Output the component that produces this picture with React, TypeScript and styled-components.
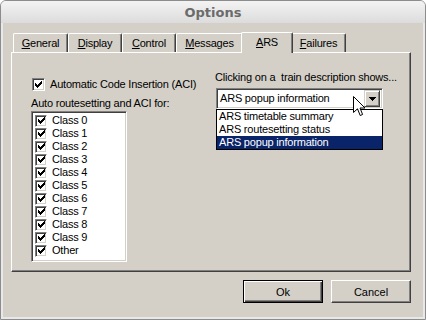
import React from "react";
import styled, { createGlobalStyle, css } from "styled-components";

const GlobalStyle = createGlobalStyle`
  html, body {
    margin: 0;
    padding: 0;
    background: #ffffff;
  }
  body {
    font-family: "Liberation Sans", Arial, sans-serif;
    font-size: 11px;
    color: #000;
  }
`;

const FACE = "#d4d0c8";

const Window = styled.div`
  width: 426px;
  height: 320px;
  box-sizing: border-box;
  border: 1px solid #8c8c8c;
  border-radius: 6px 6px 0 0;
  background: #e8e8e8;
  display: flex;
  flex-direction: column;
  overflow: hidden;
`;

const TitleBar = styled.div`
  height: 22px;
  flex: none;
  background: linear-gradient(#f3f3f3, #dcdcdc);
  display: flex;
  align-items: center;
  justify-content: center;
  font-family: "DejaVu Sans", sans-serif;
  font-weight: bold;
  font-size: 13px;
  color: #6b6b6b;
`;

const Client = styled.div`
  flex: 1;
  margin: 0 2px 2px 2px;
  background: ${FACE};
  padding: 9px 0 0 8px;
  display: flex;
  flex-direction: column;
`;

const TabStrip = styled.div`
  height: 20px;
  display: flex;
  align-items: flex-end;
  padding-left: 2px;
`;

const Tab = styled.div<{ $w: number; $active?: boolean }>`
  width: ${(p) => p.$w}px;
  height: 19px;
  box-sizing: border-box;
  background: ${FACE};
  border-top: 1px solid #ffffff;
  border-left: 1px solid #ffffff;
  border-right: 1px solid #404040;
  border-radius: 2px 2px 0 0;
  box-shadow: inset -1px 0 #808080;
  display: flex;
  align-items: center;
  justify-content: center;
  letter-spacing: -0.2px;
  ${(p) =>
    p.$active &&
    css`
      height: 21px;
      margin: 0 -2px -1px -2px;
      z-index: 1;
      padding-bottom: 2px;
    `}
`;

const Panel = styled.div`
  width: 400px;
  height: 220px;
  box-sizing: border-box;
  border-top: 1px solid #ffffff;
  border-left: 1px solid #ffffff;
  border-right: 1px solid #404040;
  border-bottom: 1px solid #404040;
  box-shadow: inset -1px -1px #808080;
  padding: 18px 0 0 19px;
  display: flex;
`;

const LeftCol = styled.div`
  width: 184px;
  display: flex;
  flex-direction: column;
`;

const RightCol = styled.div`
  display: flex;
  flex-direction: column;
`;

const CheckRow = styled.label<{ $h?: number }>`
  display: flex;
  align-items: center;
  height: ${(p) => p.$h ?? 13}px;
  line-height: 13px;
  white-space: nowrap;
  letter-spacing: -0.2px;
`;

const AciRow = styled(CheckRow)`
  margin-top: 7px;
  padding-left: 1px;
  gap: 5px;
`;

const Text = styled.div`
  line-height: 13px;
  white-space: pre;
  letter-spacing: -0.2px;
`;

const SectionLabel = styled(Text)`
  margin-top: 6px;
`;

const Sunken = styled.div`
  box-sizing: border-box;
  background: #ffffff;
  border-top: 1px solid #808080;
  border-left: 1px solid #808080;
  border-right: 1px solid #ffffff;
  border-bottom: 1px solid #ffffff;
  box-shadow: inset 1px 1px #404040, inset -1px -1px ${FACE};
`;

const ListBox = styled(Sunken)`
  margin-top: 1px;
  width: 96px;
  height: 151px;
  padding: 2px 0 0 3px;
  display: flex;
  flex-direction: column;
`;

const ListRow = styled(CheckRow)`
  gap: 5px;
`;

const Box = styled.span<{ $size: number }>`
  width: ${(p) => p.$size}px;
  height: ${(p) => p.$size}px;
  flex: none;
  box-sizing: border-box;
  background: #ffffff;
  border-top: 1px solid #808080;
  border-left: 1px solid #808080;
  border-right: 1px solid #ffffff;
  border-bottom: 1px solid #ffffff;
  box-shadow: inset 1px 1px #404040, inset -1px -1px ${FACE};
  display: flex;
  align-items: center;
  justify-content: center;
`;

const ComboWrap = styled.div`
  position: relative;
  margin-top: 4px;
  margin-left: 1px;
  width: 167px;
`;

const Combo = styled(Sunken)`
  height: 21px;
  display: flex;
  align-items: center;
  padding: 2px 2px 2px 3px;
`;

const ComboValue = styled(Text)`
  flex: 1;
`;

const DropButton = styled.div`
  width: 16px;
  height: 17px;
  box-sizing: border-box;
  background: ${FACE};
  border-top: 1px solid ${FACE};
  border-left: 1px solid ${FACE};
  border-right: 1px solid #404040;
  border-bottom: 1px solid #404040;
  box-shadow: inset 1px 1px #ffffff, inset -1px -1px #808080;
  display: flex;
  align-items: center;
  justify-content: center;
`;

const DropList = styled.div`
  position: absolute;
  top: 21px;
  left: 0;
  width: 167px;
  box-sizing: border-box;
  background: #ffffff;
  border: 1px solid #000000;
  z-index: 2;
`;

const DropItem = styled(Text)<{ $sel?: boolean }>`
  padding-left: 2px;
  background: ${(p) => (p.$sel ? "#0a246a" : "transparent")};
  color: ${(p) => (p.$sel ? "#ffffff" : "#000000")};
`;

const Cursor = styled.svg`
  position: absolute;
  left: 137px;
  top: 8px;
  z-index: 3;
`;

const ButtonRow = styled.div`
  width: 400px;
  margin-top: 8px;
  display: flex;
  justify-content: flex-end;
  gap: 8px;
`;

const Button = styled.div<{ $default?: boolean }>`
  width: 80px;
  height: 23px;
  box-sizing: border-box;
  background: ${FACE};
  border-top: 1px solid #ffffff;
  border-left: 1px solid #ffffff;
  border-right: 1px solid #404040;
  border-bottom: 1px solid #404040;
  box-shadow: inset -1px -1px #808080;
  display: flex;
  align-items: center;
  justify-content: center;
  ${(p) =>
    p.$default &&
    css`
      border: 1px solid #000000;
      box-shadow: inset 1px 1px #ffffff, inset -1px -1px #404040,
        inset -2px -2px #808080;
    `}
`;

const CHECK = [
  "......#",
  ".....##",
  "#...###",
  "##.###.",
  "#####..",
  ".###...",
  "..#....",
];

const CheckMark = () => (
  <svg width="7" height="7" viewBox="0 0 7 7" shapeRendering="crispEdges">
    {CHECK.flatMap((row, y) =>
      row.split("").map((c, x) =>
        c === "#" ? <rect key={`${x}-${y}`} x={x} y={y} width="1" height="1" fill="#000" /> : null
      )
    )}
  </svg>
);

const Checkbox = ({ size = 13 }: { size?: number }) => (
  <Box $size={size}>
    <CheckMark />
  </Box>
);

const Key = ({ children }: { children: React.ReactNode }) => (
  <span style={{ textDecoration: "underline" }}>{children}</span>
);

const tabs: { key: string; rest: string; w: number; active?: boolean }[] = [
  { key: "G", rest: "eneral", w: 55 },
  { key: "D", rest: "isplay", w: 54 },
  { key: "C", rest: "ontrol", w: 54 },
  { key: "M", rest: "essages", w: 67 },
  { key: "A", rest: "RS", w: 52, active: true },
  { key: "F", rest: "ailures", w: 55 },
];

const classes = [
  "Class 0",
  "Class 1",
  "Class 2",
  "Class 3",
  "Class 4",
  "Class 5",
  "Class 6",
  "Class 7",
  "Class 8",
  "Class 9",
  "Other",
];

export default function App() {
  return (
    <>
      <GlobalStyle />
      <Window>
        <TitleBar>Options</TitleBar>
        <Client>
          <TabStrip>
            {tabs.map((t) => (
              <Tab key={t.key} $w={t.w} $active={t.active}>
                <Key>{t.key}</Key>
                {t.rest}
              </Tab>
            ))}
          </TabStrip>
          <Panel>
            <LeftCol>
              <AciRow>
                <Checkbox />
                Automatic Code Insertion (ACI)
              </AciRow>
              <SectionLabel>Auto routesetting and ACI for:</SectionLabel>
              <ListBox>
                {classes.map((c) => (
                  <ListRow key={c}>
                    <Checkbox size={12} />
                    {c}
                  </ListRow>
                ))}
              </ListBox>
            </LeftCol>
            <RightCol>
              <Text>Clicking on a  train description shows...</Text>
              <ComboWrap>
                <Combo>
                  <ComboValue>ARS popup information</ComboValue>
                  <DropButton>
                    <svg width="7" height="4" viewBox="0 0 7 4" shapeRendering="crispEdges">
                      <path d="M0 0H7V1H6V2H5V3H4V4H3V3H2V2H1V1H0Z" fill="#000" />
                    </svg>
                  </DropButton>
                </Combo>
                <DropList>
                  <DropItem>ARS timetable summary</DropItem>
                  <DropItem>ARS routesetting status</DropItem>
                  <DropItem $sel>ARS popup information</DropItem>
                </DropList>
                <Cursor width="13" height="21" viewBox="0 0 13 21">
                  <path
                    d="M0.5 0.5 L0.5 16.5 L4.5 12.8 L7.2 19.5 L9.6 18.5 L7 12 L12 12 Z"
                    fill="#ffffff"
                    stroke="#000000"
                    strokeWidth="1"
                  />
                </Cursor>
              </ComboWrap>
            </RightCol>
          </Panel>
          <ButtonRow>
            <Button $default>Ok</Button>
            <Button>Cancel</Button>
          </ButtonRow>
        </Client>
      </Window>
    </>
  );
}
